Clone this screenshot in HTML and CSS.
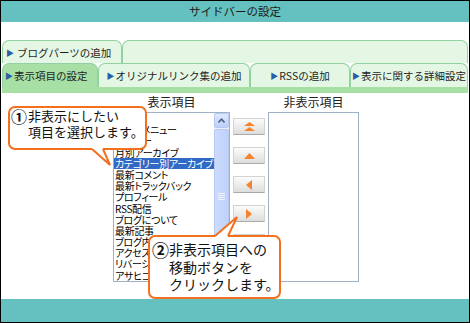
FILE: index.html
```
<!DOCTYPE html>
<html lang="ja">
<head>
<meta charset="utf-8">
<title>サイドバーの設定</title>
<link rel="stylesheet" href="styles.css">
</head>
<body>
<div class="frame">
  <header class="titlebar">サイドバーの設定</header>
  <main class="main">
    <div class="tabs">
      <div class="tabrow back">
        <div class="tab t-parts"><span class="mk">▶</span>ブログパーツの追加</div>
        <div class="tab t-blank"></div>
      </div>
      <div class="tabrow front">
        <div class="tab active t-1"><span class="mk">▶</span>表示項目の設定</div>
        <div class="tab t-2"><span class="mk">▶</span>オリジナルリンク集の追加</div>
        <div class="tab t-3"><span class="mk">▶</span>RSSの追加</div>
        <div class="tab t-4"><span class="mk">▶</span>表示に関する詳細設定</div>
      </div>
      <div class="stripe"></div>
    </div>
    <div class="editor">
      <div class="col col-left">
        <div class="label">表示項目</div>
        <div class="listbox">
          <ul class="items">
            <li>推薦書</li>
            <li>ブログメニュー</li>
            <li>ブロガー</li>
            <li>月別アーカイブ</li>
            <li class="sel">カテゴリー別アーカイブ</li>
            <li>最新コメント</li>
            <li>最新トラックバック</li>
            <li>プロフィール</li>
            <li>RSS配信</li>
            <li>ブログについて</li>
            <li>最新記事</li>
            <li>ブログ内検索</li>
            <li>アクセス</li>
            <li>リバーシ</li>
            <li>アサヒコム</li>
          </ul>
          <div class="scrollbar">
            <div class="sb-btn">
              <svg width="7" height="5" viewBox="0 0 7 5"><polyline points="0.5,4.5 3.5,1.2 6.5,4.5" fill="none" stroke="#4d6185" stroke-width="1.6"/></svg>
            </div>
            <div class="sb-thumb">
              <svg width="7" height="7" viewBox="0 0 7 7"><path d="M0 0.5H7M0 2.5H7M0 4.5H7M0 6.5H7" stroke="#eef3ff" stroke-width="1"/></svg>
            </div>
          </div>
        </div>
      </div>
      <div class="buttons">
        <div class="btn"><svg width="11" height="9" viewBox="0 0 11 9"><polygon points="0,4 5.5,0 11,4" fill="#f7832a"/><polygon points="0,9 5.5,5 11,9" fill="#f7832a"/></svg></div>
        <div class="btn"><svg width="11" height="6" viewBox="0 0 11 6"><polygon points="0,6 5.5,0 11,6" fill="#f7832a"/></svg></div>
        <div class="btn"><svg width="6" height="10" viewBox="0 0 6 10"><polygon points="6,0 0,5 6,10" fill="#f7832a"/></svg></div>
        <div class="btn"><svg width="6" height="10" viewBox="0 0 6 10"><polygon points="0,0 6,5 0,10" fill="#f7832a"/></svg></div>
        <div class="btn"><svg width="11" height="9" viewBox="0 0 11 9"><polygon points="0,0 5.5,4 11,0" fill="#f7832a"/><polygon points="0,5 5.5,9 11,5" fill="#f7832a"/></svg></div>
      </div>
      <div class="col col-right">
        <div class="label">非表示項目</div>
        <div class="listbox"></div>
      </div>
    </div>
  </main>
  <footer class="footbar"></footer>

  <div class="callout c1">
    <span class="num">①</span>
    <div class="lines"><div>非表示にしたい</div><div>項目を選択します。</div></div>
    <svg class="tail tail1" width="30" height="24" viewBox="0 0 30 24"><polygon points="6,2 17,2 17,5 24,21 6,5" fill="#fff"/><polyline points="6,5 24,21 17,5" fill="none" stroke="#f2701e" stroke-width="2"/></svg>
  </div>
  <div class="callout c2">
    <span class="num">②</span>
    <div class="lines"><div>非表示項目への</div><div>移動ボタンを</div><div>クリックします。</div></div>
    <svg class="tail tail2" width="36" height="30" viewBox="0 0 36 30"><polygon points="7,23 29,4 20,23 20,26 7,26" fill="#fff"/><polyline points="7,23 29,4 20,23" fill="none" stroke="#f2701e" stroke-width="2"/></svg>
  </div>
</div>
</body>
</html>
```
FILE: styles.css
```
html, body {
  margin: 0;
  padding: 0;
  background: #fff;
}

.frame {
  position: relative;
  width: 470px;
  height: 323px;
  box-sizing: border-box;
  border: 1px solid #000;
  display: flex;
  flex-direction: column;
  background: #fff;
  overflow: hidden;
  font-family: "Noto Sans CJK JP", "Noto Sans", sans-serif;
  color: #222;
}

.titlebar {
  height: 21px;
  background: #65c1bf;
  text-align: center;
  font-size: 11.5px;
  line-height: 21px;
  color: #1c1c1c;
}

.main {
  flex: 1;
}

.tabs {
  margin-top: 18px;
  padding: 0 1px;
}

.tabrow {
  display: flex;
}

.back {
  height: 23px;
}

.front {
  height: 24px;
}

.tab {
  box-sizing: border-box;
  border: 1px solid #92d1a2;
  border-bottom: none;
  border-radius: 7px 7px 0 0;
  background: #e4f6e4;
  font-size: 10.5px;
  line-height: 12px;
  white-space: nowrap;
  display: flex;
  align-items: center;
  color: #1e1e1e;
}

.back .tab {
  padding-top: 2px;
}

.t-parts {
  width: 120px;
  padding-left: 3px;
}

.t-parts .mk {
  margin-right: 3px;
}

.t-blank {
  flex: 1;
}

.front .tab {
  justify-content: center;
}

.t-1 { width: 96px; }
.t-2 { width: 152px; }
.t-3 { width: 100px; }
.t-4 { flex: 1; }

.tab.active {
  background: #a7dfa5;
  justify-content: flex-start;
  padding-left: 2px;
}

.mk {
  color: #2a5fa8;
  font-size: 8px;
  margin-right: 1px;
}

.stripe {
  height: 6px;
  background: #a7dfa5;
}

.editor {
  display: flex;
  align-items: flex-start;
  padding-left: 112px;
  margin-top: 2px;
}

.col {
  display: flex;
  flex-direction: column;
}

.label {
  height: 14px;
  line-height: 14px;
  font-size: 12px;
  text-align: center;
  margin-bottom: 3px;
  color: #222;
}

.listbox {
  height: 170px;
  box-sizing: border-box;
  border: 1px solid #9fb1c6;
  display: flex;
  background: #fff;
}

.col-left .listbox {
  width: 117px;
}

.col-right .listbox {
  width: 91px;
}

.items {
  list-style: none;
  margin: 0;
  padding: 0;
  flex: 1;
  min-width: 0;
  font-size: 10px;
  line-height: 11.2px;
  letter-spacing: -0.3px;
  font-feature-settings: "palt";
  color: #000;
  white-space: nowrap;
  overflow: hidden;
}

.items li {
  height: 11.2px;
  padding-left: 1px;
}

.items .sel {
  background: #316ac5;
  color: #fff;
}

.scrollbar {
  width: 15px;
  display: flex;
  flex-direction: column;
  background: #eef1f9;
}

.sb-btn {
  height: 15px;
  box-sizing: border-box;
  border: 1px solid #b5c8f2;
  border-radius: 2px;
  background: linear-gradient(#dfe8fd, #bccffa);
  display: flex;
  align-items: center;
  justify-content: center;
}

.sb-thumb {
  margin-top: 1px;
  height: 134px;
  box-sizing: border-box;
  border: 1px solid #b5c8f2;
  border-radius: 2px;
  background: linear-gradient(90deg, #cddbfc, #bfd1fb);
  display: flex;
  align-items: center;
  justify-content: center;
}

.buttons {
  display: flex;
  flex-direction: column;
  gap: 12px;
  padding-top: 23px;
  margin: 0 3px;
}

.btn {
  width: 32px;
  height: 17px;
  box-sizing: border-box;
  border: 1px solid #d2d2d2;
  border-bottom-color: #aaaaaa;
  border-radius: 1px;
  background: linear-gradient(#fcfcfc, #dddddd);
  display: flex;
  align-items: center;
  justify-content: center;
}

.footbar {
  height: 23px;
  background: #65c1bf;
}

.callout {
  position: absolute;
  box-sizing: border-box;
  border: 2px solid #f2701e;
  border-radius: 7px;
  background: #fff;
  color: #111;
  display: flex;
  align-items: flex-start;
  white-space: nowrap;
}

.num {
  font-weight: bold;
  display: block;
}

.c1 {
  left: 7px;
  top: 105px;
  width: 139px;
  height: 44px;
  font-size: 13px;
  line-height: 16px;
  padding: 0 0 0 1px;
}

.c1 .num {
  width: 17px;
  font-size: 16px;
}

.c2 {
  left: 147px;
  top: 234px;
  width: 133px;
  height: 64px;
  font-size: 14px;
  line-height: 17.5px;
  padding: 4px 0 0 2px;
}

.c2 .num {
  width: 19px;
  font-size: 17px;
}

.tail {
  position: absolute;
  overflow: visible;
}

.tail1 {
  left: 76px;
  top: 36px;
}

.tail2 {
  left: 58px;
  top: -24px;
}
```
